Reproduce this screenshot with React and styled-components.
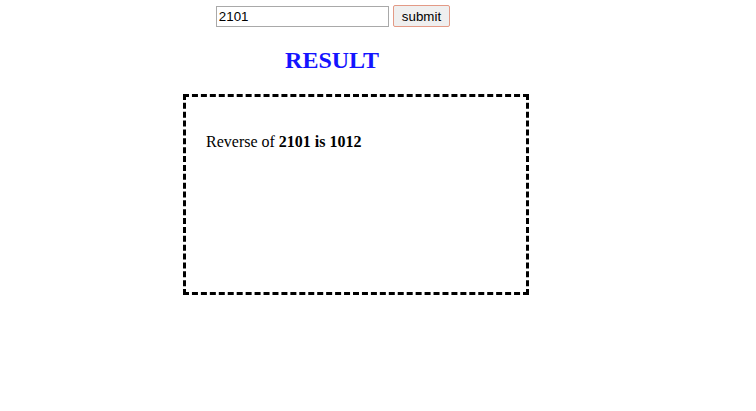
import React, { useState } from "react";
import styled, { createGlobalStyle } from "styled-components";

const GlobalStyle = createGlobalStyle`
  body {
    margin: 0;
    background: #fff;
    font-family: "Liberation Serif", "Times New Roman", serif;
  }
`;

const Page = styled.div`
  width: 664px;
  padding-top: 5px;
`;

const Form = styled.form`
  display: flex;
  justify-content: center;
  align-items: center;
  gap: 4px;
  padding-left: 2px;
`;

const Input = styled.input`
  box-sizing: border-box;
  width: 173px;
  height: 21px;
  margin: 1px 0 0;
  padding: 1px 2px;
  border: 1px solid #a9a9a9;
  font-family: "Liberation Sans", Arial, sans-serif;
  font-size: 13.33px;
  color: #000;
  outline: none;
`;

const Button = styled.button`
  box-sizing: border-box;
  height: 22px;
  padding: 1px 8px;
  border: 1px solid #e39a86;
  border-radius: 2px;
  background: #efefef;
  font-family: "Liberation Sans", Arial, sans-serif;
  font-size: 13.33px;
  color: #000;
`;

const Title = styled.h2`
  margin: 19px 0 0;
  text-align: center;
  color: #1414ff;
  font-size: 24px;
  font-weight: bold;
  line-height: 28px;
`;

const Box = styled.div`
  box-sizing: border-box;
  width: 346px;
  height: 201px;
  margin: 20px 0 0 183px;
  padding: 20px;
  border: 3px dashed #000;
`;

const Line = styled.p`
  margin: 16px 0 0;
  font-size: 16px;
`;

export default function App() {
  const [value, setValue] = useState("2101");
  const reversed = value.split("").reverse().join("");

  return (
    <>
      <GlobalStyle />
      <Page>
        <Form onSubmit={(e) => e.preventDefault()}>
          <Input value={value} onChange={(e) => setValue(e.target.value)} />
          <Button type="submit">submit</Button>
        </Form>
        <Title>RESULT</Title>
        <Box>
          <Line>
            Reverse of <b>{value} is {reversed}</b>
          </Line>
        </Box>
      </Page>
    </>
  );
}
